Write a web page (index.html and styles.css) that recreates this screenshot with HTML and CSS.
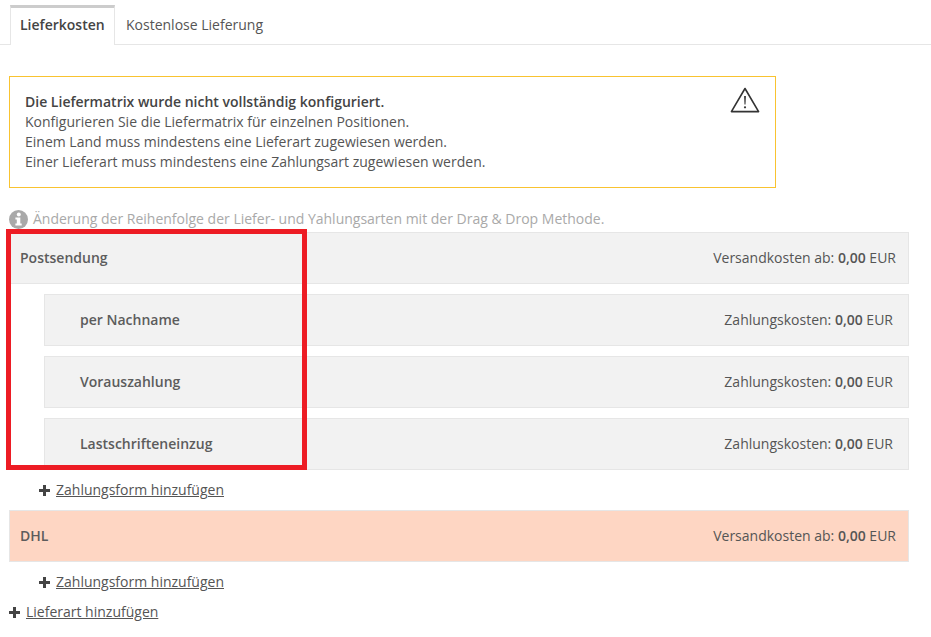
FILE: index.html
```html
<!DOCTYPE html>
<html lang="de">
<head>
<meta charset="utf-8">
<title>Lieferkosten</title>
<link rel="stylesheet" href="styles.css">
</head>
<body>
<div class="page">
  <nav class="tabs">
    <a class="tab active">Lieferkosten</a>
    <a class="tab">Kostenlose Lieferung</a>
  </nav>
  <div class="alert">
    <svg class="warn" width="30" height="27" viewBox="0 0 30 27"><path d="M15 2.5 L28.6 25.6 H1.4 Z" fill="none" stroke="#333" stroke-width="1.6" stroke-linejoin="round"/><path d="M14.1 10h1.8l-.4 8.5h-1z" fill="#333"/><circle cx="15" cy="21.3" r="1.1" fill="#333"/></svg>
    <strong>Die Liefermatrix wurde nicht vollständig konfiguriert.</strong><br>
    Konfigurieren Sie die Liefermatrix für einzelnen Positionen.<br>
    Einem Land muss mindestens eine Lieferart zugewiesen werden.<br>
    Einer Lieferart muss mindestens eine Zahlungsart zugewiesen werden.
  </div>
  <p class="hint">
    <svg class="info" width="19" height="19" viewBox="0 0 19 19"><circle cx="9.5" cy="9.5" r="9.5" fill="#a9a9a9"/><circle cx="9.8" cy="4.6" r="2" fill="#fff"/><path d="M6.4 7.6h4.9v6h1.4v2H6.4v-2h1.4V9.6H6.4z" fill="#fff"/></svg>
    Änderung der Reihenfolge der Liefer- und Yahlungsarten mit der Drag &amp; Drop Methode.
  </p>
  <div class="matrix">
    <div class="row"><span class="name">Postsendung</span><span>Versandkosten ab: <b>0,00</b> EUR</span></div>
    <div class="row sub"><span class="name">per Nachname</span><span>Zahlungskosten: <b>0,00</b> EUR</span></div>
    <div class="row sub"><span class="name">Vorauszahlung</span><span>Zahlungskosten: <b>0,00</b> EUR</span></div>
    <div class="row sub"><span class="name">Lastschrifteneinzug</span><span>Zahlungskosten: <b>0,00</b> EUR</span></div>
    <div class="add add-pay"><svg class="plus" width="11" height="11" viewBox="0 0 11 11"><path d="M4 0h3v4h4v3H7v4H4V7H0V4h4z" fill="#444"/></svg><a>Zahlungsform hinzufügen</a></div>
    <div class="row warn-row"><span class="name">DHL</span><span>Versandkosten ab: <b>0,00</b> EUR</span></div>
    <div class="add add-pay"><svg class="plus" width="11" height="11" viewBox="0 0 11 11"><path d="M4 0h3v4h4v3H7v4H4V7H0V4h4z" fill="#444"/></svg><a>Zahlungsform hinzufügen</a></div>
    <div class="add add-del"><svg class="plus" width="11" height="11" viewBox="0 0 11 11"><path d="M4 0h3v4h4v3H7v4H4V7H0V4h4z" fill="#444"/></svg><a>Lieferart hinzufügen</a></div>
    <div class="highlight"></div>
  </div>
</div>
</body>
</html>
```
FILE: styles.css
```css
* { box-sizing: border-box; }
html, body { margin: 0; padding: 0; background: #fff; }
body {
  font-family: "Open Sans", sans-serif;
  font-size: 14px;
  line-height: 20px;
  color: #555;
  height: 637px;
  overflow: hidden;
}
.page { padding: 5px 0 0 9px; }
.tabs {
  display: flex;
  height: 40px;
  margin-left: -9px;
  padding-left: 10px;
  border-bottom: 1px solid #e6e6e6;
}
.tab { padding: 10px 10px 0 11px; height: 40px; }
.tab.active {
  width: 105px;
  padding: 7px 0 0 9px;
  border: 1px solid #e6e6e6;
  border-top: 3px solid #ccc;
  border-bottom: 0;
  background: #fff;
  color: #444;
  font-weight: 600;
}
.alert {
  position: relative;
  width: 767px;
  margin-top: 31px;
  padding: 15px;
  border: 1px solid #f9c330;
  color: #555;
}
.alert strong { font-weight: 600; color: #444; }
.warn { position: absolute; top: 9px; right: 15px; }
.hint {
  display: flex;
  align-items: center;
  gap: 5px;
  margin: 21px 0 0;
  height: 20px;
  color: #a9a9a9;
}
.matrix { position: relative; width: 900px; margin-top: 3px; }
.row {
  display: flex;
  justify-content: space-between;
  align-items: center;
  height: 52px;
  padding: 0 12px 0 10px;
  background: #f2f2f2;
  border: 1px solid #e6e6e6;
}
.row.sub { margin: 10px 0 0 35px; padding: 0 15px 0 35px; }
.name { font-weight: 600; color: #5c5c5c; }
.row b { font-weight: 600; }
.warn-row { background: #fed6c3; margin-top: 10px; }
.add { display: flex; align-items: center; gap: 6px; height: 20px; color: #444; }
.add a { text-decoration: underline; color: #555; }
.add-pay { margin: 10px 0 0 30px; }
.add-del { margin-top: 10px; }
.highlight {
  position: absolute;
  left: -3px;
  top: -3px;
  width: 301px;
  height: 241px;
  border: 5px solid #ed1c24;
}
```
